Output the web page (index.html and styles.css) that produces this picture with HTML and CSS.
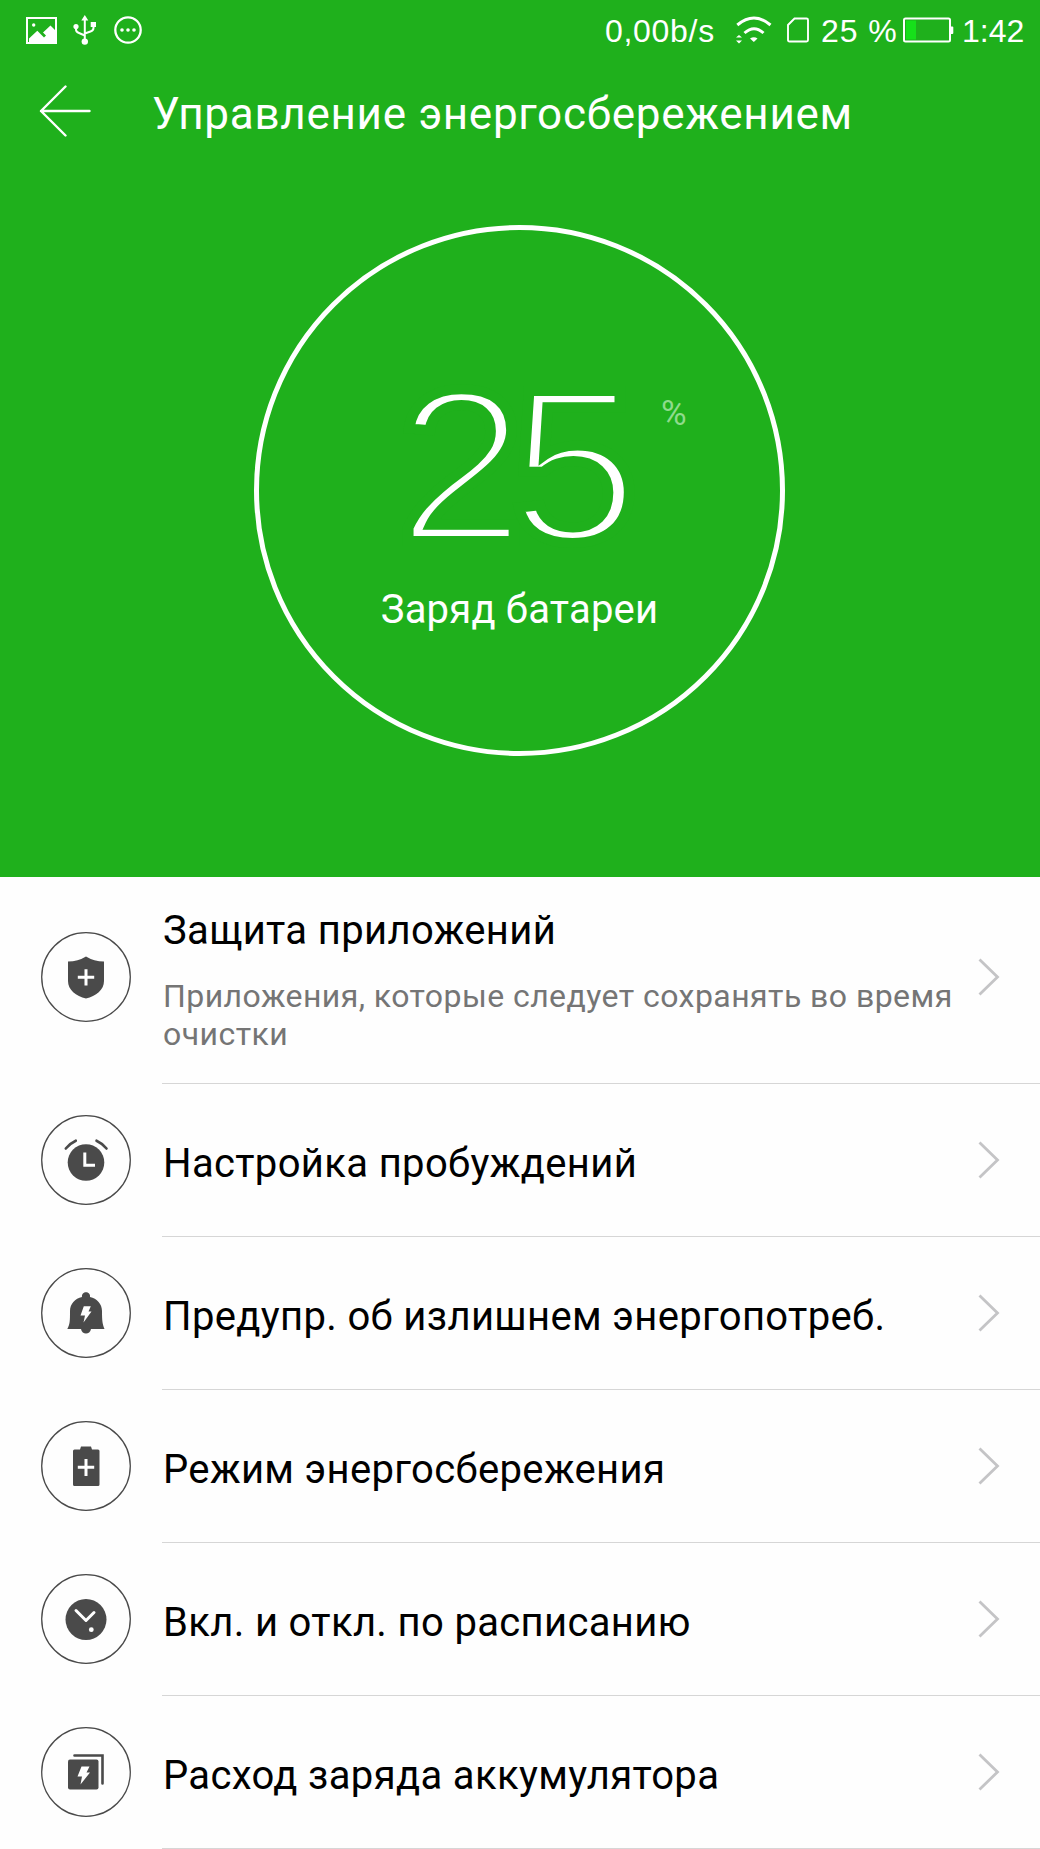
FILE: index.html
```html
<!DOCTYPE html>
<html lang="ru">
<head>
    <meta charset="UTF-8">
    <meta name="viewport" content="width=device-width, initial-scale=1.0">
    <title>Управление энергосбережением</title>
    <link rel="stylesheet" href="styles.css">
</head>
<body>
    <header class="hero">
        <div class="status-bar">
            <div class="status-left">
                <svg class="icon-image" width="31" height="27" viewBox="0 0 31 27">
                    <rect x="1" y="1" width="29" height="25" fill="none" stroke="#fff" stroke-width="2"/>
                    <circle cx="7.7" cy="8" r="1.7" fill="#fff"/>
                    <path d="M3 21.5 L11.3 13.8 L18 20.5 L20 18.500 L17 15.500 L24.500 8.500 L29 13 V25 H3 Z" fill="#fff"/>
                </svg>
                <svg class="icon-usb" width="24" height="30" viewBox="0 0 24 30">
                    <path d="M11.800 4 V25 M3 11 V14.500 Q3 17 6 18 L11.800 20.500 M20.500 9 V13 Q20.500 15.500 17.500 16.500 L11.800 18.500" fill="none" stroke="#fff" stroke-width="2"/>
                    <path d="M11.800 0 L15.300 5.500 H8.300 Z M17.700 7 H23 V12 H17.700 Z" fill="#fff"/>
                    <circle cx="3" cy="11.500" r="2.600" fill="#fff"/>
                    <circle cx="11.800" cy="26.600" r="3.200" fill="#fff"/>
                </svg>
                <svg class="icon-dots" width="28" height="28" viewBox="0 0 28 28">
                    <circle cx="14" cy="14" r="12.700" fill="none" stroke="#fff" stroke-width="2.300"/>
                    <circle cx="8" cy="14" r="1.800" fill="#fff"/>
                    <circle cx="14" cy="14" r="1.800" fill="#fff"/>
                    <circle cx="20" cy="14" r="1.800" fill="#fff"/>
                </svg>
            </div>
            <div class="status-right">
                <span class="speed">0,00b/s</span>
                <svg class="icon-wifi" width="38" height="28" viewBox="0 0 38 28">
                    <path d="M2.300 9 Q19 -5 35.500 9" fill="none" stroke="#fff" stroke-width="3"/>
                    <path d="M9.500 17 Q19 8.500 28.500 17" fill="none" stroke="#fff" stroke-width="3"/>
                    <path d="M15 22.500 Q19 19.800 22.500 22.500 L18.800 26 Z" fill="#fff"/>
                    <path d="M1 21.500 L4 19 L7 21.500 Z M1 24.500 L4 27.500 L7 24.500 Z" fill="#fff"/>
                </svg>
                <svg class="icon-sim" width="22" height="26" viewBox="0 0 22 26">
                    <path d="M7.500 1.500 H19.500 Q21 1.500 21 3 V23 Q21 24.500 19.500 24.500 H2.500 Q1 24.500 1 23 V8 Z" fill="none" stroke="#fff" stroke-width="1.900"/>
                </svg>
                <span class="percent">25 %</span>
                <svg class="icon-battery" width="51" height="26" viewBox="0 0 51 26">
                    <rect x="3" y="3.500" width="10" height="19" fill="#16e01a"/>
                    <rect x="1" y="1.500" width="46" height="23" rx="1.500" fill="none" stroke="#fff" stroke-width="2"/>
                    <rect x="47" y="9.500" width="3.300" height="7.500" rx="1" fill="#fff"/>
                </svg>
                <span class="time">1:42</span>
            </div>
        </div>

        <div class="title-bar">
            <svg class="back" width="52" height="52" viewBox="0 0 52 52">
                <path d="M26.500 1.500 L2 26 L26.500 50.500 M2 26 H50.500" fill="none" stroke="#fff" stroke-width="2.400" stroke-linecap="round" stroke-linejoin="round"/>
            </svg>
            <h1 class="title">Управление энергосбережением</h1>
        </div>

        <div class="gauge">
            <div class="gauge-value"><span class="gauge-number">25</span><span class="gauge-unit">%</span></div>
            <div class="gauge-label">Заряд батареи</div>
        </div>
    </header>

    <main class="menu">
        <div class="item item-tall">
            <svg class="item-icon" viewBox="0 0 90 90">
                <circle class="ring" cx="45" cy="45" r="44.300"/>
                <path class="fill" d="M45 24.500 Q53 29.500 63 29.500 V49 C63 58 55 64 45 66.500 C35 64 27 58 27 49 V29.500 Q37 29.500 45 24.500 Z"/>
                <path class="cut" d="M45 37.200 V53.500 M36.800 45.300 H53.200"/>
            </svg>
            <div class="item-body">
                <div class="item-text">
                    <div class="item-title">Защита приложений</div>
                    <div class="item-desc">Приложения, которые следует сохранять во время очистки</div>
                </div>
                <svg class="chevron" viewBox="0 0 22 38"><path d="M1.500 1.500 L19.500 19 L1.500 36.500"/></svg>
            </div>
        </div>
        <div class="item">
            <svg class="item-icon" viewBox="0 0 90 90">
                <circle class="ring" cx="45" cy="45" r="44.300"/>
                <circle class="fill" cx="45" cy="47.500" r="18.300"/>
                <path class="cut" d="M43.800 37.500 V50.200 H54"/>
                <path class="line" d="M24.800 33.500 Q29 28.300 34.800 25.700 M55.500 25.700 Q61.300 28.300 65.500 33.500"/>
            </svg>
            <div class="item-body">
                <div class="item-title">Настройка пробуждений</div>
                <svg class="chevron" viewBox="0 0 22 38"><path d="M1.500 1.500 L19.500 19 L1.500 36.500"/></svg>
            </div>
        </div>
        <div class="item">
            <svg class="item-icon" viewBox="0 0 90 90">
                <circle class="ring" cx="45" cy="45" r="44.300"/>
                <path class="fill" d="M41 29 C40 22.500 50 22.500 49 29 C56 30.500 61 36 61 43 C61 53 61.500 56 63.500 61 H50 C49 67 41 67 40 61 H26.300 C29 56 29 53 29 43 C29 36 34 30.500 41 29 Z"/>
                <path class="bolt" d="M42.800 38.300 H49.800 L47.500 43.500 H50.500 L42.500 54.500 L44 47.500 H39.500 Z"/>
            </svg>
            <div class="item-body">
                <div class="item-title">Предупр. об излишнем энергопотреб.</div>
                <svg class="chevron" viewBox="0 0 22 38"><path d="M1.500 1.500 L19.500 19 L1.500 36.500"/></svg>
            </div>
        </div>
        <div class="item">
            <svg class="item-icon" viewBox="0 0 90 90">
                <circle class="ring" cx="45" cy="45" r="44.300"/>
                <path class="fill" d="M40 25.500 H50 L51 28.500 H57 Q58.500 28.500 58.500 30 V63.500 Q58.500 65 57 65 H33.500 Q32 65 32 63.500 V30 Q32 28.500 33.500 28.500 H39 Z"/>
                <path class="cut" d="M45 38 V55 M36.800 46.300 H53.200"/>
            </svg>
            <div class="item-body">
                <div class="item-title">Режим энергосбережения</div>
                <svg class="chevron" viewBox="0 0 22 38"><path d="M1.500 1.500 L19.500 19 L1.500 36.500"/></svg>
            </div>
        </div>
        <div class="item">
            <svg class="item-icon" viewBox="0 0 90 90">
                <circle class="ring" cx="45" cy="45" r="44.300"/>
                <circle class="fill" cx="45" cy="45.500" r="20.500"/>
                <path class="cut round" d="M35 36.500 L45 46.500 L53 38.500"/>
                <circle cx="50.300" cy="55.700" r="2.400" fill="#fff"/>
            </svg>
            <div class="item-body">
                <div class="item-title">Вкл. и откл. по расписанию</div>
                <svg class="chevron" viewBox="0 0 22 38"><path d="M1.500 1.500 L19.500 19 L1.500 36.500"/></svg>
            </div>
        </div>
        <div class="item">
            <svg class="item-icon" viewBox="0 0 90 90">
                <circle class="ring" cx="45" cy="45" r="44.300"/>
                <rect class="fill" x="27" y="32.500" width="30.500" height="30" rx="2"/>
                <path class="line" d="M33.500 28.500 H61.500 V56.500"/>
                <path class="bolt" d="M40.500 39.500 H48.500 L45.500 45.500 H49 L39.500 57.500 L41 49.500 H36.500 Z"/>
            </svg>
            <div class="item-body">
                <div class="item-title">Расход заряда аккумулятора</div>
                <svg class="chevron" viewBox="0 0 22 38"><path d="M1.500 1.500 L19.500 19 L1.500 36.500"/></svg>
            </div>
        </div>
    </main>
</body>
</html>
```

FILE: styles.css
```css
* {
    box-sizing: border-box;
}

body {
    margin: 0;
    height: 1849px;
    overflow: hidden;
    background-color: #fefefe;
    font-family: Roboto, 'Noto Sans', sans-serif;
}

svg {
    display: block;
    flex: none;
}

/* green top part */
.hero {
    height: 877px;
    background-color: #1fb01c;
    color: #fff;
}

.status-bar {
    height: 60px;
    padding: 0 14px 0 26px;
    display: flex;
    justify-content: space-between;
    align-items: center;
    font-family: 'Liberation Sans', Arial, sans-serif;
    font-size: 32px;
    line-height: 60px;
    white-space: nowrap;
}

.status-left,
.status-right {
    display: flex;
    align-items: center;
}

.status-right span {
    padding-top: 2px;
}

.icon-usb {
    margin-left: 16px;
}

.icon-dots {
    margin-left: 17px;
}

.speed {
    width: 130px;
    letter-spacing: 0.7px;
}

.icon-sim {
    margin-left: 14px;
}

.percent {
    width: 84px;
    margin-left: 12px;
    letter-spacing: 0.9px;
}

.icon-battery {
    margin-left: -2px;
}

.time {
    width: 64px;
    margin-left: 8px;
}

.title-bar {
    height: 104px;
    padding-left: 39px;
    display: flex;
    align-items: center;
}

.back {
    margin-bottom: 2px;
}

.title {
    margin: 4px 0 0 61px;
    font-size: 44px;
    font-weight: 400;
    line-height: 60px;
    letter-spacing: 0.72px;
    white-space: nowrap;
}

.gauge {
    width: 531px;
    height: 531px;
    margin: 61px 0 0 254px;
    padding-top: 138px;
    border: 5px solid #fff;
    border-radius: 50%;
    text-align: center;
}

.gauge-value {
    position: relative;
    height: 200px;
}

/* the outline in background colour makes the digits thin */
.gauge-number {
    display: inline-block;
    margin-right: 19px;
    font-family: 'Liberation Sans', Arial, sans-serif;
    font-size: 217px;
    line-height: 197px;
    letter-spacing: -15px;
    transform: scaleX(1.07);
    -webkit-text-stroke: 10px #1fb01c;
}

.gauge-unit {
    position: absolute;
    top: 26px;
    left: 402px;
    font-size: 35px;
    line-height: 40px;
    color: #8fdb8d;
}

.gauge-label {
    margin-top: 18px;
    font-size: 40px;
    line-height: 48px;
    letter-spacing: 0.2px;
}

/* settings list */
.item {
    height: 153px;
    padding-left: 41px;
    display: flex;
    align-items: center;
}

.item-tall {
    height: 207px;
}

.item-icon {
    width: 90px;
    height: 90px;
    margin-bottom: 1px;
}

.item-tall .item-icon,
.item-tall .chevron {
    margin-bottom: 7px;
}

.ring {
    fill: none;
    stroke: #4a4a4a;
    stroke-width: 1.3;
}

.fill {
    fill: #4a4a4a;
}

.cut {
    fill: none;
    stroke: #fff;
    stroke-width: 3;
}

.round {
    stroke-linecap: round;
    stroke-linejoin: round;
}

.line {
    fill: none;
    stroke: #4a4a4a;
    stroke-width: 2.6;
    stroke-linecap: round;
}

.bolt {
    fill: #fff;
}

.item-body {
    flex: 1;
    height: 100%;
    margin-left: 31px;
    padding-right: 40px;
    display: flex;
    justify-content: space-between;
    align-items: center;
    border-bottom: 1px solid #d6d6d6;
}

.item-text {
    width: 810px;
    margin-right: -20px;
}

.item-title {
    padding: 7px 0 0 1px;
    font-size: 40px;
    line-height: 48px;
    letter-spacing: 0.35px;
    color: #000;
    white-space: nowrap;
}

.item-text .item-title {
    padding-top: 0;
}

.item-desc {
    margin: 22px 0 1px;
    padding-left: 1px;
    font-size: 32px;
    line-height: 38px;
    letter-spacing: 0.44px;
    color: #757575;
}

.chevron {
    width: 22px;
    height: 38px;
}

.chevron path {
    fill: none;
    stroke: #c4c4c6;
    stroke-width: 2.8;
}
```
